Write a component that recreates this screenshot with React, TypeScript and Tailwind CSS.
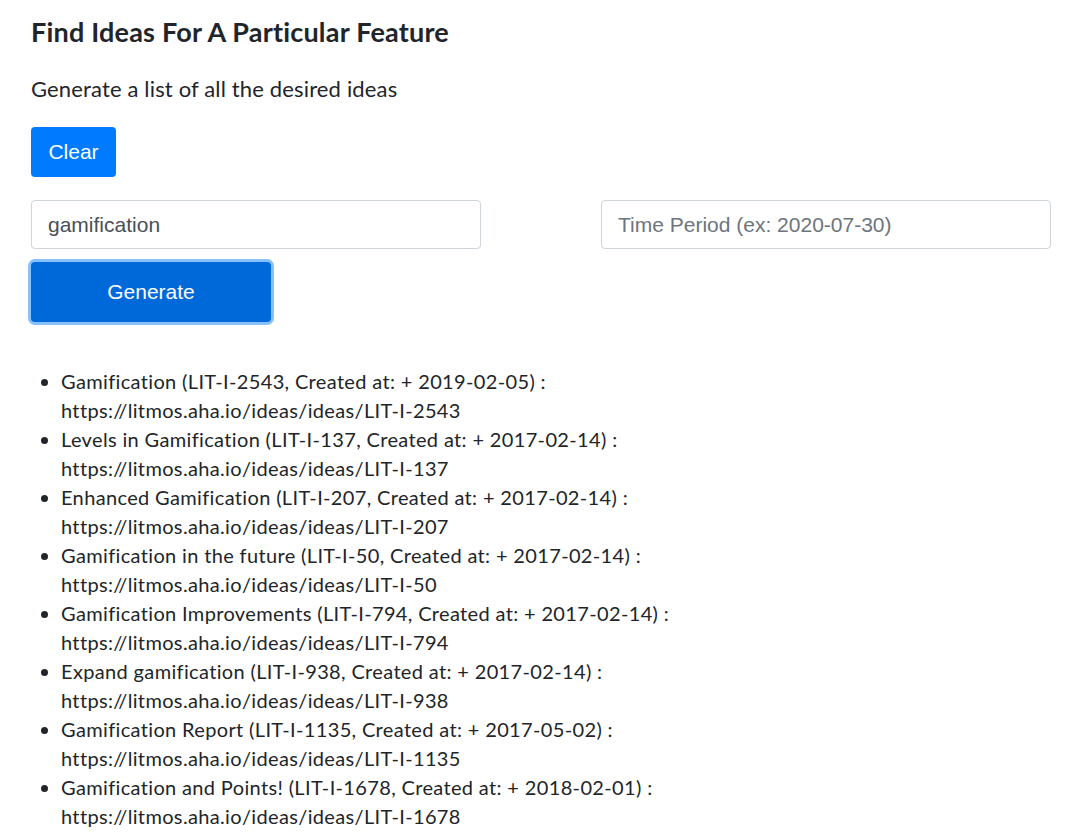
import { useState } from 'react'

const ideas = [
  { name: 'Gamification', id: 'LIT-I-2543', date: '2019-02-05' },
  { name: 'Levels in Gamification', id: 'LIT-I-137', date: '2017-02-14' },
  { name: 'Enhanced Gamification', id: 'LIT-I-207', date: '2017-02-14' },
  { name: 'Gamification in the future', id: 'LIT-I-50', date: '2017-02-14' },
  { name: 'Gamification Improvements', id: 'LIT-I-794', date: '2017-02-14' },
  { name: 'Expand gamification', id: 'LIT-I-938', date: '2017-02-14' },
  { name: 'Gamification Report', id: 'LIT-I-1135', date: '2017-05-02' },
  { name: 'Gamification and Points!', id: 'LIT-I-1678', date: '2018-02-01' },
]

export default function App() {
  const [feature, setFeature] = useState('gamification')
  const [period, setPeriod] = useState('')

  return (
    <div className="min-h-screen bg-white pl-[31px] pr-[16px] text-[#212529] font-['Lato',sans-serif]">
      <h3 className="pt-[16px] text-[27px] font-bold leading-[32px] tracking-[0.2px]">
        Find Ideas For A Particular Feature
      </h3>

      <p className="mt-[26px] text-[22px] leading-[30px] tracking-[0.15px]">Generate a list of all the desired ideas</p>

      <button
        type="button"
        onClick={() => setFeature('')}
        className="mt-[23px] h-[50px] w-[85px] rounded-[4px] bg-[#007bff] text-[21px] text-white font-['Liberation_Sans',Arial,sans-serif]"
      >
        Clear
      </button>

      <div className="mt-[23px] flex w-[1020px] justify-between">
        <input
          value={feature}
          onChange={(e) => setFeature(e.target.value)}
          className="h-[49px] w-[450px] rounded-[4px] border border-[#ced4da] px-[16px] text-[21px] text-[#495057] outline-none font-['Liberation_Sans',Arial,sans-serif]"
        />
        <input
          value={period}
          onChange={(e) => setPeriod(e.target.value)}
          placeholder="Time Period (ex: 2020-07-30)"
          className="h-[49px] w-[450px] rounded-[4px] border border-[#ced4da] px-[16px] text-[21px] text-[#495057] placeholder:text-[#6c757d] outline-none font-['Liberation_Sans',Arial,sans-serif]"
        />
      </div>

      <button
        type="button"
        className="mt-[13px] h-[60px] w-[240px] rounded-[4px] bg-[#0069d9] text-[21px] text-white ring-[3px] ring-[#8ac0f8] font-['Liberation_Sans',Arial,sans-serif]"
      >
        Generate
      </button>

      <ul className="mt-[45px] list-disc pl-[30px] text-[20px] leading-[29px] tracking-[0.35px]">
        {ideas.map((idea) => (
          <li key={idea.id}>
            {idea.name} ({idea.id}, Created at: + {idea.date}) :
            <br />
            https://litmos.aha.io/ideas/ideas/{idea.id}
          </li>
        ))}
      </ul>
    </div>
  )
}
